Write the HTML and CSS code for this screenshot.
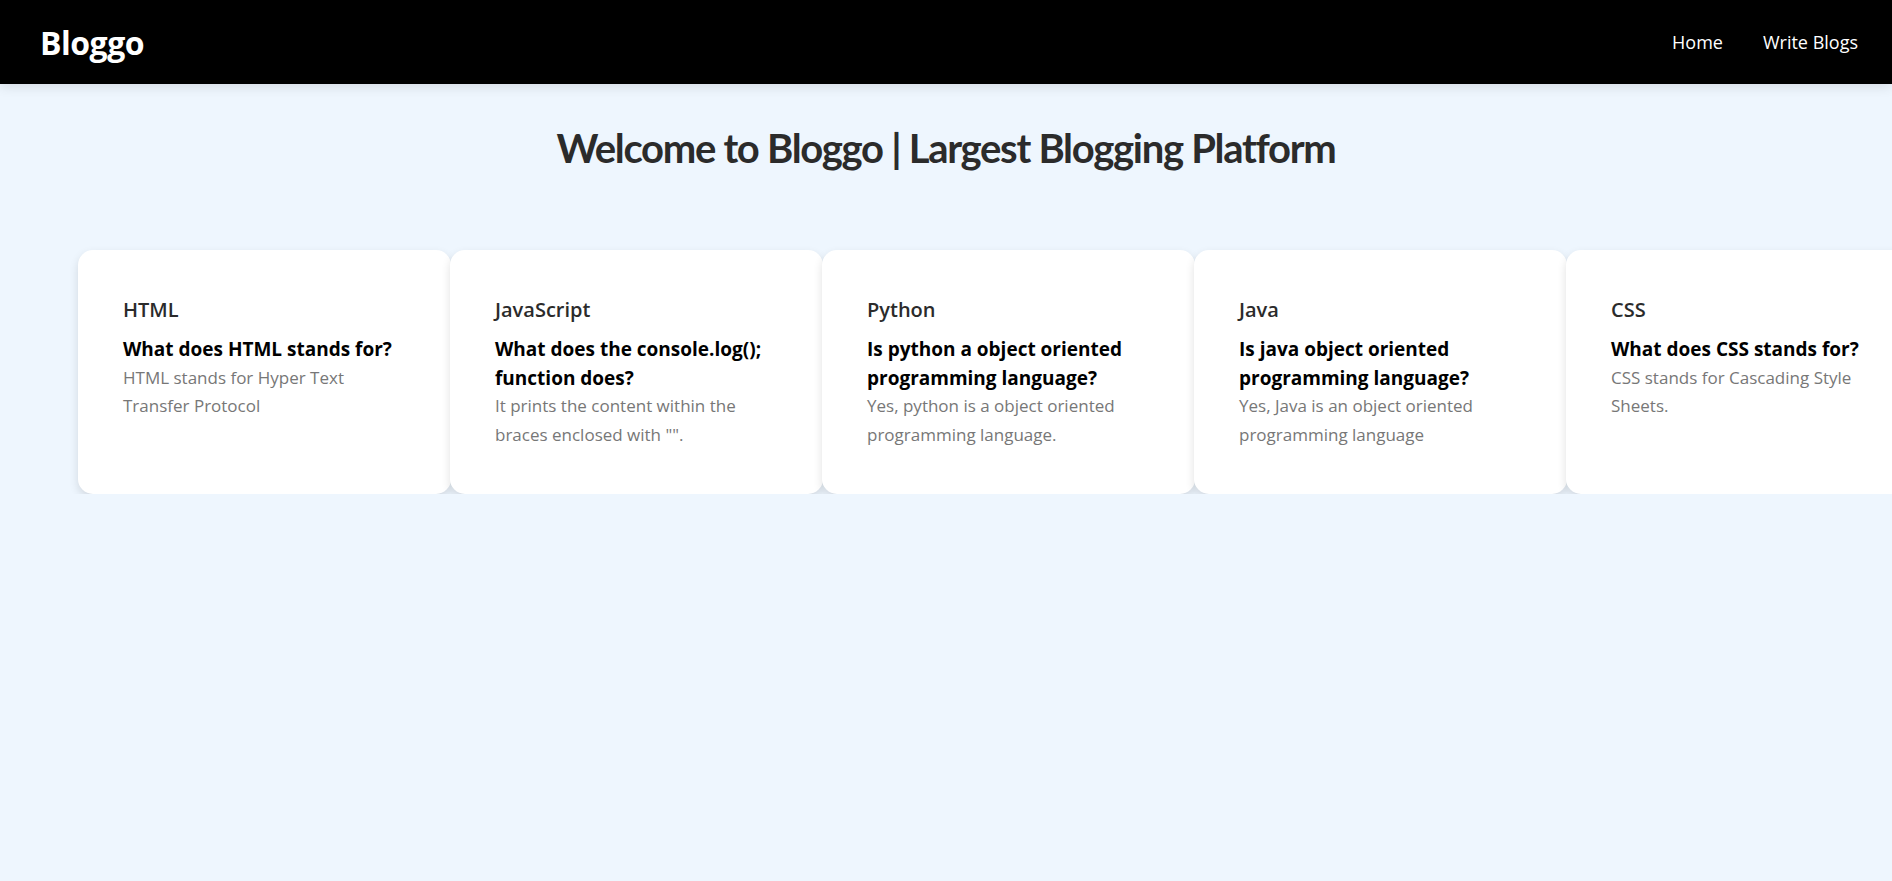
FILE: index.html
```html
<!DOCTYPE html>
<html lang="en">
<head>
<meta charset="utf-8">
<title>Bloggo</title>
<link rel="stylesheet" href="styles.css">
</head>
<body>
<nav class="navbar">
  <a class="logo" href="#">Bloggo</a>
  <ul class="nav-links">
    <li><a href="#">Home</a></li>
    <li><a href="#">Write Blogs</a></li>
  </ul>
</nav>
<main class="main">
  <h1 class="title">Welcome to Bloggo | Largest Blogging Platform</h1>
  <section class="cards">
    <article class="card">
      <h3 class="card-topic">HTML</h3>
      <h4 class="card-question">What does HTML stands for?</h4>
      <p class="card-text">HTML stands for Hyper Text Transfer Protocol</p>
    </article>
    <article class="card">
      <h3 class="card-topic">JavaScript</h3>
      <h4 class="card-question">What does the console.log(); function does?</h4>
      <p class="card-text">It prints the content within the braces enclosed with "".</p>
    </article>
    <article class="card">
      <h3 class="card-topic">Python</h3>
      <h4 class="card-question">Is python a object oriented programming language?</h4>
      <p class="card-text">Yes, python is a object oriented programming language.</p>
    </article>
    <article class="card">
      <h3 class="card-topic">Java</h3>
      <h4 class="card-question">Is java object oriented programming language?</h4>
      <p class="card-text">Yes, Java is an object oriented programming language</p>
    </article>
    <article class="card">
      <h3 class="card-topic">CSS</h3>
      <h4 class="card-question">What does CSS stands for?</h4>
      <p class="card-text">CSS stands for Cascading Style Sheets.</p>
    </article>
  </section>
</main>
</body>
</html>
```
FILE: styles.css
```css
* { box-sizing: border-box; }
html, body {
  margin: 0;
  padding: 0;
  height: 100%;
  overflow: hidden;
}
body {
  background: #eef6fe;
  font-family: "Open Sans", "Liberation Sans", sans-serif;
  color: #2b2b2b;
}
.navbar {
  height: 84px;
  background: #000;
  display: flex;
  align-items: center;
  justify-content: space-between;
  padding: 0 34px 0 40px;
  box-shadow: 0 2px 12px rgba(0, 0, 0, 0.12);
  position: relative;
  z-index: 2;
}
.logo {
  color: #fff;
  font-weight: 700;
  font-size: 32px;
  text-decoration: none;
  letter-spacing: -0.5px;
}
.nav-links {
  list-style: none;
  display: flex;
  gap: 40px;
  margin: 0;
  padding: 0;
}
.nav-links a {
  color: #fff;
  text-decoration: none;
  font-size: 18px;
}
.main {
  overflow: hidden;
}
.title {
  text-align: center;
  margin: 40px 0 0;
  font-family: "Lato", "Open Sans", sans-serif;
  font-size: 40px;
  line-height: 48px;
  font-weight: 700;
  color: #2b2b2b;
  letter-spacing: -1.3px;
}
.cards {
  display: flex;
  padding: 0 0 0 78px;
  margin-top: 78px;
}
.card {
  flex: 0 0 373px;
  height: 244px;
  margin-right: -1px;
  background: #fff;
  border-radius: 15px;
  padding: 46px 45px;
  box-shadow: 0 4px 10px rgba(0, 0, 0, 0.12);
}
.card-topic {
  margin: 0;
  font-size: 20px;
  font-weight: 600;
  color: #2b2b2b;
  line-height: 1.4;
}
.card-question {
  margin: 11px 0 0;
  font-size: 19px;
  font-weight: 700;
  color: #000;
  line-height: 1.5;
}
.card-text {
  margin: 0;
  font-size: 17px;
  color: #777;
  line-height: 1.7;
}
```
